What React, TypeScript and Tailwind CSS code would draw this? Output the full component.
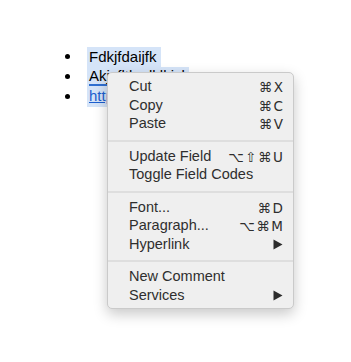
import { Fragment } from "react"

type Item = { label: string; shortcut?: string; submenu?: boolean }

const groups: Item[][] = [
    [
        { label: "Cut", shortcut: "⌘X" },
        { label: "Copy", shortcut: "⌘C" },
        { label: "Paste", shortcut: "⌘V" },
    ],
    [
        { label: "Update Field", shortcut: "⌥⇧⌘U" },
        { label: "Toggle Field Codes" },
    ],
    [
        { label: "Font...", shortcut: "⌘D" },
        { label: "Paragraph...", shortcut: "⌥⌘M" },
        { label: "Hyperlink", submenu: true },
    ],
    [
        { label: "New Comment" },
        { label: "Services", submenu: true },
    ],
]

function Arrow() {
    return (
        <svg width="10" height="11" viewBox="0 0 10 11" className="mr-[2px]">
            <polygon points="0.5,0.5 9.5,5.5 0.5,10.5" fill="#2b2b2b" />
        </svg>
    )
}

function MenuRow({ item }: { item: Item }) {
    return (
        <div className="flex h-[18.5px] items-center justify-between pl-[21px] pr-[8.5px]">
            <span>{item.label}</span>
            {item.shortcut && (
                <span className="font-['DejaVu_Sans','Liberation_Sans',sans-serif] text-[13.5px] tracking-[1.5px]">
                    {item.shortcut}
                </span>
            )}
            {item.submenu && <Arrow />}
        </div>
    )
}

export default function App() {
    return (
        <div className="relative h-[362px] w-[351px] bg-white font-['Liberation_Sans',Arial,sans-serif] text-[15px] text-black">
            {/* document text */}
            <ul className="pt-[47px]">
                <li className="flex h-[19.5px] items-center">
                    <span className="ml-[65px] mr-[17px] h-[5px] w-[5px] rounded-full bg-black" />
                    <span className="flex h-full items-center bg-[#d5e4f8] pl-[2px] pr-[4px]">Fdkjfdaijfk</span>
                </li>
                <li className="flex h-[20px] items-center">
                    <span className="ml-[65px] mr-[17px] h-[5px] w-[5px] rounded-full bg-black" />
                    <span className="relative flex h-full items-center bg-[#d5e4f8] pl-[2px] pr-[4px]">
                        Akjsfltksdklkjsl
                        <span className="absolute bottom-[1px] left-[2px] h-[2px] w-[24px] bg-[#2f6fd0]" />
                    </span>
                </li>
                <li className="flex h-[20px] items-center">
                    <span className="ml-[65px] mr-[17px] h-[5px] w-[5px] rounded-full bg-black" />
                    <span className="flex h-full items-center bg-[#d5e4f8] pl-[2px] pr-[3px] text-[#1d5fcf] underline">
                        https://
                    </span>
                </li>
            </ul>

            {/* context menu */}
            <div className="absolute left-[107px] top-[72px] w-[187px] rounded-[5px] border border-[#cacaca] bg-[#efefef] pb-[3px] pt-[5px] text-[14.5px] text-[#2e2e2e] shadow-[0_5px_14px_rgba(0,0,0,0.22)]">
                {groups.map((group, i) => (
                    <Fragment key={i}>
                        {i > 0 && <div className="my-[6px] h-[2px] bg-[#dedede]" />}
                        {group.map((item) => (
                            <MenuRow key={item.label} item={item} />
                        ))}
                    </Fragment>
                ))}
            </div>
        </div>
    )
}
